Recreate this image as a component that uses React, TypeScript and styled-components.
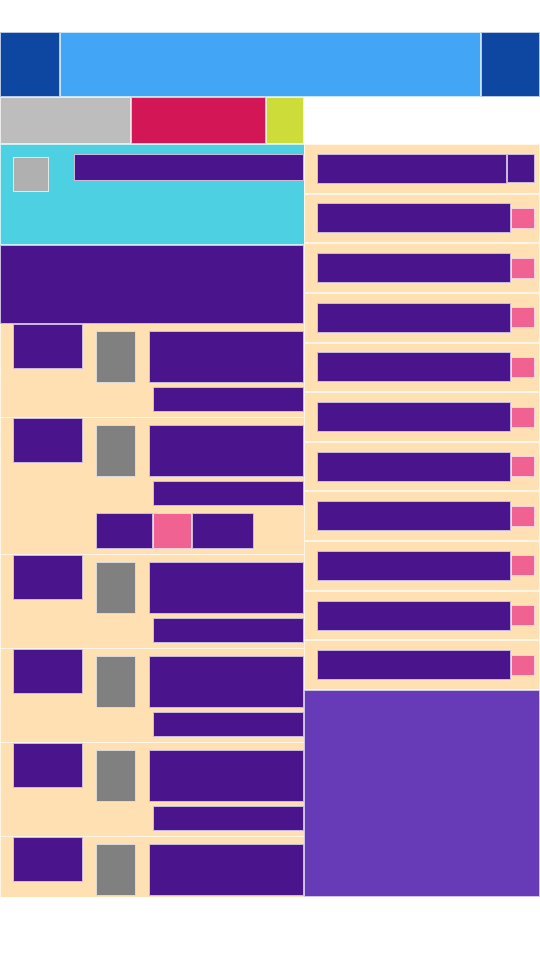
import styled, { createGlobalStyle, css } from 'styled-components'

const GlobalStyle = createGlobalStyle`
  body {
    margin: 0;
    background: #fff;
    font-family: 'Liberation Sans', Arial, sans-serif;
  }
`

const box = css`
  box-sizing: border-box;
  border: 1px solid rgba(255, 255, 255, 0.7);
`

const Page = styled.div`
  width: 540px;
  padding-top: 32px;
`

const Header = styled.div`
  display: flex;
  height: 65px;
`

const HeaderBlock = styled.div<{ $color: string; $width?: number }>`
  ${box};
  background: ${(p) => p.$color};
  width: ${(p) => (p.$width ? `${p.$width}px` : 'auto')};
  flex: ${(p) => (p.$width ? 'none' : 1)};
`

const Tabs = styled.div`
  display: flex;
  width: 304px;
  height: 47px;
`

const Tab = styled.div<{ $color: string; $width: number }>`
  ${box};
  background: ${(p) => p.$color};
  width: ${(p) => p.$width}px;
`

const Main = styled.div`
  display: flex;
  height: 753px;
  overflow: hidden;
`

const LeftCol = styled.div`
  width: 304px;
  display: flex;
  flex-direction: column;
  flex: none;
`

const Hero = styled.div`
  ${box};
  border-right: none;
  height: 101px;
  background: #4dd0e1;
  display: flex;
  align-items: flex-start;
  padding: 9px 0 0 12px;
  flex: none;
`

const HeroThumb = styled.div`
  ${box};
  width: 36px;
  height: 35px;
  margin-top: 3px;
  background: #b0b0b0;
`

const HeroBar = styled.div`
  ${box};
  flex: 1;
  height: 27px;
  margin-left: 25px;
  background: #4a148c;
`

const Banner = styled.div`
  ${box};
  height: 79px;
  background: #4a148c;
  flex: none;
`

const Item = styled.div`
  ${box};
  border-top: none;
  border-right: none;
  display: flex;
  align-items: flex-start;
  padding: 0 0 5px 12px;
  background: #ffe0b2;
  flex: none;
`

const ItemThumb = styled.div`
  ${box};
  width: 70px;
  height: 45px;
  background: #4a148c;
`

const ItemBody = styled.div`
  flex: 1;
  display: flex;
  flex-direction: column;
  margin-left: 13px;
  padding-top: 7px;
`

const ItemTop = styled.div`
  display: flex;
  gap: 13px;
`

const Cover = styled.div`
  ${box};
  width: 40px;
  height: 52px;
  background: #808080;
`

const Title = styled.div`
  ${box};
  flex: 1;
  height: 52px;
  background: #4a148c;
`

const Subtitle = styled.div`
  ${box};
  height: 25px;
  margin: 4px 0 0 57px;
  background: #4a148c;
`

const Actions = styled.div`
  display: flex;
  margin-top: 7px;
`

const Action = styled.div<{ $color: string; $width: number }>`
  ${box};
  width: ${(p) => p.$width}px;
  height: 36px;
  background: ${(p) => p.$color};
`

const RightCol = styled.div`
  flex: 1;
  display: flex;
  flex-direction: column;
`

const Menu = styled.div`
  height: 546px;
  display: flex;
  flex-direction: column;
  flex: none;
`

const MenuRow = styled.div`
  ${box};
  flex: 1;
  display: flex;
  align-items: center;
  padding: 0 4px 0 12px;
  background: #ffe0b2;
`

const MenuBar = styled.div`
  ${box};
  flex: 1;
  height: 30px;
  background: #4a148c;
`

const MenuBadge = styled.div<{ $accent?: boolean }>`
  ${box};
  width: ${(p) => (p.$accent ? 28 : 24)}px;
  height: ${(p) => (p.$accent ? 29 : 21)}px;
  background: ${(p) => (p.$accent ? '#4a148c' : '#f06292')};
`

const Panel = styled.div`
  ${box};
  flex: 1;
  background: #673ab7;
`

const items = [false, true, false, false, false, false]

function App() {
  return (
    <Page>
      <GlobalStyle />
      <Header>
        <HeaderBlock $color='#0d47a1' $width={60} />
        <HeaderBlock $color='#42a5f5' />
        <HeaderBlock $color='#0d47a1' $width={59} />
      </Header>
      <Tabs>
        <Tab $color='#bdbdbd' $width={131} />
        <Tab $color='#d31756' $width={135} />
        <Tab $color='#cddc39' $width={38} />
      </Tabs>
      <Main>
        <LeftCol>
          <Hero>
            <HeroThumb />
            <HeroBar />
          </Hero>
          <Banner />
          {items.map((withActions, i) => (
            <Item key={i}>
              <ItemThumb />
              <ItemBody>
                <ItemTop>
                  <Cover />
                  <Title />
                </ItemTop>
                <Subtitle />
                {withActions && (
                  <Actions>
                    <Action $color='#4a148c' $width={57} />
                    <Action $color='#f06292' $width={39} />
                    <Action $color='#4a148c' $width={62} />
                  </Actions>
                )}
              </ItemBody>
            </Item>
          ))}
        </LeftCol>
        <RightCol>
          <Menu>
            {Array.from({ length: 11 }, (_, i) => (
              <MenuRow key={i}>
                <MenuBar />
                <MenuBadge $accent={i === 0} />
              </MenuRow>
            ))}
          </Menu>
          <Panel />
        </RightCol>
      </Main>
    </Page>
  )
}

export default App
